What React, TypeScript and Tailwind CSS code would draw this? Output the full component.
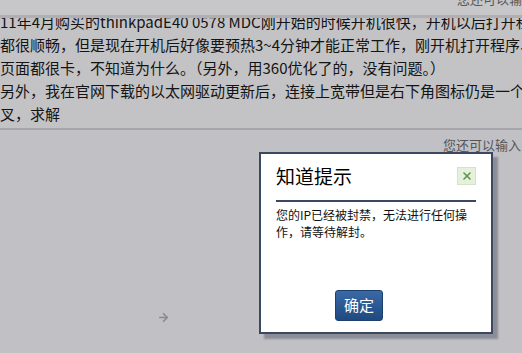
import React from 'react';
import { X, ArrowRight } from 'lucide-react';

const lines = [
  '11年4月购买的thinkpadE40 0578 MDC刚开始的时候开机很快，开机以后打开程序、',
  '都很顺畅，但是现在开机后好像要预热3~4分钟才能正常工作，刚开机打开程序、',
  '页面都很卡，不知道为什么。（另外，用360优化了的，没有问题。）',
  '另外，我在官网下载的以太网驱动更新后，连接上宽带但是右下角图标仍是一个',
  '叉，求解',
];

const font = { fontFamily: '"Noto Sans CJK SC", "Noto Sans", sans-serif' };

export default function App() {
  return (
    <div className="relative h-[353px] w-full overflow-hidden bg-[#c1c1c5]" style={font}>
      {/* 上一栏剩余部分 */}
      <div className="h-[18px] overflow-hidden whitespace-nowrap border-b-[3px] border-[#b0b0b4] bg-[#c7c7c9] pl-[457px]">
        <div className="-mt-[9px] text-[13px] leading-[16px] text-[#555]">您还可以输入1000字</div>
      </div>

      {/* 问题内容 */}
      <div className="h-[112px] overflow-hidden border-b-2 border-[#a7a7ab] bg-[#c3c3c5]">
        <div className="-mt-[8px] text-[15px] leading-[23px] text-[#141414]">
          {lines.map((l, i) => (
            <div key={i} className="whitespace-nowrap">{l}</div>
          ))}
        </div>
      </div>

      <div className="whitespace-nowrap pl-[443px] pt-[7px] text-[13px] leading-[16px] text-[#555]">
        您还可以输入1000字
      </div>

      <div className="pl-[157px] pt-[158px] text-[#8a8a8c]">
        <ArrowRight size={13} strokeWidth={3} />
      </div>

      {/* 提示弹窗 */}
      <div className="absolute left-[259px] top-[152px] flex h-[182px] w-[234px] flex-col border-2 border-[#3a4961] bg-white shadow-[5px_5px_2px_#8b8d97]">
        <div className="flex h-[44px] items-center justify-between px-[15px]">
          <span className="text-[19px] leading-[24px] text-black">知道提示</span>
          <div className="flex h-[18px] w-[19px] items-center justify-center border border-[#d3e3c8] bg-[#e5f1dc]">
            <X size={12} strokeWidth={3.2} className="text-[#5f9450]" />
          </div>
        </div>
        <div className="mx-[15px] mt-[2px] h-[2px] bg-[#3a4961]" />
        <div className="mt-[4px] px-[15px] text-[12px] leading-[17px] text-[#111]">
          您的IP已经被封禁，无法进行任何操
          <br />
          作，请等待解封。
        </div>
        <div className="ml-[74px] mt-[50px]">
          <button className="h-[31px] w-[48px] rounded-[3px] border border-[#1d3f6d] bg-gradient-to-b from-[#3a69a6] to-[#1f4a80] text-[15px] text-white">
            确定
          </button>
        </div>
      </div>
    </div>
  );
}
